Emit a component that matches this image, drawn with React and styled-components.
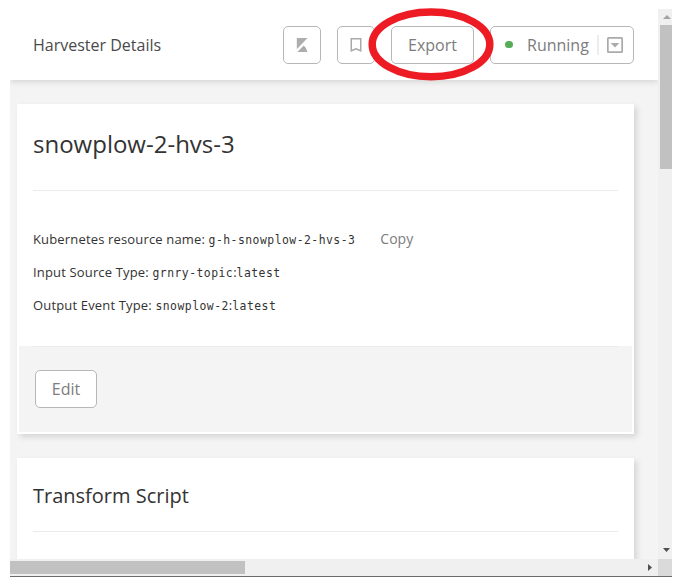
import React from "react";
import styled, { createGlobalStyle } from "styled-components";

const GlobalStyle = createGlobalStyle`
  *, *::before, *::after { box-sizing: border-box; }
  body {
    margin: 0;
    background: #fff;
    color: #333;
    font-family: "Open Sans", "Noto Sans", sans-serif;
    overflow: hidden;
  }
`;

const Window = styled.div`
  position: relative;
  display: grid;
  grid-template: 550px 17px / 648px 14px;
  width: 662px;
  height: 568px;
  margin: 9px 0 0 10px;
  border-bottom: 1px solid #6b6b6b;
`;

const Viewport = styled.div`
  display: flex;
  flex-direction: column;
  overflow: hidden;
  background: #f4f4f4;
`;

const Header = styled.header`
  display: flex;
  flex: none;
  align-items: center;
  height: 71px;
  padding: 0 24px 0 23px;
  background: #fff;
  box-shadow: 0 2px 6px rgba(0, 0, 0, 0.13);
`;

const PageTitle = styled.h1`
  flex: 1;
  margin: 0;
  font-size: 16px;
  font-weight: 400;
  line-height: 22px;
  color: #4a4a4a;
`;

const Toolbar = styled.div`
  display: flex;
  gap: 16px;
`;

const Button = styled.button`
  display: flex;
  align-items: center;
  justify-content: center;
  width: ${(p) => p.$width}px;
  height: 38px;
  padding: 0;
  border: 1px solid #b7b7b7;
  border-radius: 5px;
  background: #fff;
  color: #7c7c7c;
  font: 400 16px/22px "Open Sans", "Noto Sans", sans-serif;
`;

const StatusButton = styled(Button)`
  justify-content: flex-start;
  padding-left: 14px;
`;

const StatusDot = styled.span`
  width: 7.5px;
  height: 7.5px;
  margin-right: 14.5px;
  border-radius: 50%;
  background: #57ad57;
`;

const StatusDivider = styled.span`
  width: 2px;
  height: 20px;
  margin: 0 8px 0 auto;
  background: #ededed;
`;

const StatusIcon = styled.svg`
  margin-right: 10px;
`;

const Cards = styled.main`
  display: flex;
  flex-direction: column;
  gap: 24px;
  padding: 24px 24px 0 7px;
`;

const Card = styled.section`
  flex: none;
  height: ${(p) => p.$height}px;
  padding: 0 2px 2px;
  background: #fff;
  box-shadow: 3px 3px 6px rgba(0, 0, 0, 0.13);
`;

const CardHead = styled.div`
  display: flex;
  height: ${(p) => p.$height}px;
  margin: 0 14px;
  padding-top: ${(p) => p.$top}px;
  border-bottom: 1px solid #ebebeb;
`;

const CardTitle = styled.h2`
  margin: 0;
  font-size: ${(p) => p.$size}px;
  font-weight: 400;
  line-height: 32px;
  color: #333;
`;

const Details = styled.div`
  height: 155px;
  margin: 0 14px;
  padding-top: 32px;
`;

const DetailRow = styled.div`
  display: flex;
  align-items: baseline;
  height: 33px;
  font-size: 13px;
  line-height: 33px;
  white-space: pre;
`;

const DetailLabel = styled.span`
  letter-spacing: 0.16px;
`;

const Code = styled.code`
  font-family: "DejaVu Sans Mono", monospace;
  font-size: 11.4px;
  line-height: 1;
  letter-spacing: 0.48px;
`;

const CopyLink = styled.a`
  margin-left: 25px;
  font-size: 14px;
  line-height: 30px;
  color: #7c7c7c;
`;

const CardFooter = styled.footer`
  height: 86px;
  padding: 0 14px;
  background: #f4f4f4;
`;

const FooterActions = styled.div`
  display: flex;
  padding: 23px 2px;
  border-top: 1px solid #ebebeb;
`;

const VerticalBar = styled.div`
  display: flex;
  flex-direction: column;
  align-items: center;
  justify-content: space-between;
  padding: 0 0 7px 2px;
  background: #f0f0f0;
`;

const VerticalThumb = styled.div`
  width: 12px;
  height: 144px;
  margin-bottom: auto;
  background: #c1c1c1;
`;

const HorizontalBar = styled.div`
  display: flex;
  align-items: center;
  justify-content: space-between;
  padding-right: 6px;
  background: #f0f0f0;
`;

const HorizontalThumb = styled.div`
  width: 235px;
  height: 13px;
  background: #c1c1c1;
`;

const UpArrow = styled.svg`
  flex: none;
  margin: 6px 0 6px 1px;
`;

const Corner = styled.div`
  background: #dadada;
`;

const Highlight = styled.svg`
  position: absolute;
  left: 358px;
  top: -1px;
  pointer-events: none;
`;

function Detail({ label, children }) {
  return (
    <DetailRow>
      <DetailLabel>{label}: </DetailLabel>
      {children}
    </DetailRow>
  );
}

export default function App() {
  return (
    <>
      <GlobalStyle />
      <Window>
        <Viewport>
          <Header>
            <PageTitle>Harvester Details</PageTitle>
            <Toolbar>
              <Button $width={38} aria-label="Kibana">
                <svg width="12" height="14" viewBox="0 0 12 14" fill="#adadad">
                  <path d="M.8 0h10.7L.8 11.2z" />
                  <path d="M1.3 14 7.8 7.4Q10.6 9.6 11.5 14z" />
                </svg>
              </Button>
              <Button $width={38} aria-label="Bookmark">
                <svg width="12" height="14" viewBox="0 0 12 14" fill="none" stroke="#aaa" strokeWidth="1.5">
                  <path d="M1.25.75h9.5v12L6 10.7l-4.75 2.05z" />
                </svg>
              </Button>
              <Button $width={83}>Export</Button>
              <StatusButton $width={144}>
                <StatusDot />
                Running
                <StatusDivider />
                <StatusIcon width="16" height="16" viewBox="0 0 16 16">
                  <rect x=".85" y=".85" width="14.3" height="14.3" rx=".7" fill="none" stroke="#aaa" strokeWidth="1.7" />
                  <path d="M3.7 6h8.6L8 10.4z" fill="#aaa" />
                </StatusIcon>
              </StatusButton>
            </Toolbar>
          </Header>
          <Cards>
            <Card $height={330}>
              <CardHead $height={87} $top={24}>
                <CardTitle $size={24}>snowplow-2-hvs-3</CardTitle>
              </CardHead>
              <Details>
                <Detail label="Kubernetes resource name">
                  <Code>g-h-snowplow-2-hvs-3</Code>
                  <CopyLink>Copy</CopyLink>
                </Detail>
                <Detail label="Input Source Type">
                  <Code>grnry-topic</Code>:<Code>latest</Code>
                </Detail>
                <Detail label="Output Event Type">
                  <Code>snowplow-2</Code>:<Code>latest</Code>
                </Detail>
              </Details>
              <CardFooter>
                <FooterActions>
                  <Button $width={62}>Edit</Button>
                </FooterActions>
              </CardFooter>
            </Card>
            <Card $height={330}>
              <CardHead $height={74} $top={22}>
                <CardTitle $size={20}>Transform Script</CardTitle>
              </CardHead>
            </Card>
          </Cards>
        </Viewport>
        <VerticalBar>
          <UpArrow width="8" height="4" viewBox="0 0 8 4">
            <path d="M0 4 4 0l4 4z" fill="#a3a3a3" />
          </UpArrow>
          <VerticalThumb />
          <svg width="7" height="4" viewBox="0 0 7 4">
            <path d="M0 0h7L3.5 4z" fill="#505050" />
          </svg>
        </VerticalBar>
        <HorizontalBar>
          <HorizontalThumb />
          <svg width="4" height="7" viewBox="0 0 4 7">
            <path d="M0 0v7l4-3.5z" fill="#505050" />
          </svg>
        </HorizontalBar>
        <Corner />
        <Highlight width="127" height="73" viewBox="0 0 127 73">
          <ellipse cx="63" cy="36.4" rx="58.8" ry="32.3" fill="none" stroke="#ed1c24" strokeWidth="7.5" />
        </Highlight>
      </Window>
    </>
  );
}
